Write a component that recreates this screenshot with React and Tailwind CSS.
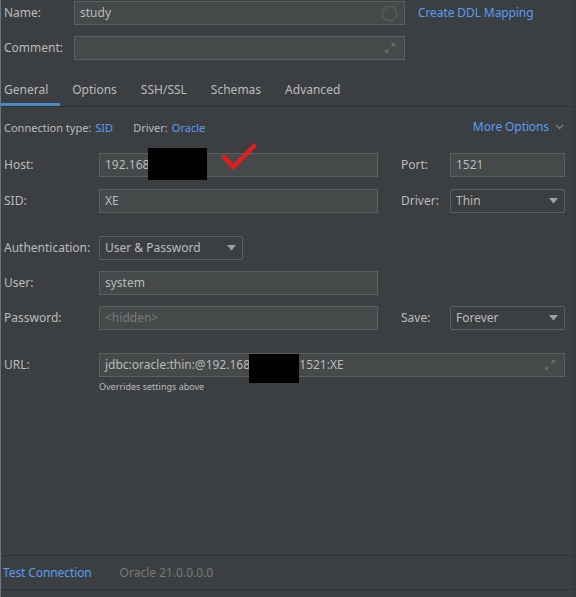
import React from "react";

function Field({ w, children, className = "", muted = false }) {
  return (
    <div
      className={`relative h-[24px] ${w} bg-[#45494a] border border-[#5e6060] flex items-center pl-[5px] ${
        muted ? "text-[#7b7b7b]" : "text-[#bbbbbb]"
      } ${className}`}
    >
      {children}
    </div>
  );
}

function Select({ w, value }) {
  return (
    <div
      className={`h-[24px] ${w} border border-[#5e6060] rounded-[2px] flex items-center justify-between pl-[5px] pr-[6px] text-[#bbbbbb]`}
    >
      <span>{value}</span>
      <svg width="9" height="6" viewBox="0 0 9 6">
        <path d="M0 0 L9 0 L4.5 5.5 Z" fill="#a0a0a0" />
      </svg>
    </div>
  );
}

function ExpandIcon() {
  return (
    <svg width="12" height="12" viewBox="0 0 12 12" className="absolute right-[8px]">
      <path d="M7 1 H11 V5 Z" fill="#6a6d6e" />
      <path d="M1 7 V11 H5 Z" fill="#6a6d6e" />
      <path d="M10 2 L7.5 4.5 M2 10 L4.5 7.5" stroke="#6a6d6e" strokeWidth="1.2" />
    </svg>
  );
}

function Label({ children, w = "w-[95px]" }) {
  return <div className={`${w} shrink-0 text-[#bbbbbb]`}>{children}</div>;
}

export default function App() {
  const tabs = ["General", "Options", "SSH/SSL", "Schemas", "Advanced"];

  return (
    <div className="w-[576px] h-[597px] bg-[#3c3f41] border-l border-r-[3px] border-l-[#6c7784] border-r-[#38393b] flex flex-col text-[12px] font-['Noto_Sans',sans-serif] leading-none overflow-hidden">
      {/* name / comment */}
      <div className="pl-[3px] pt-[1px] flex flex-col gap-[11px]">
        <div className="flex items-center">
          <Label w="w-[70px]">Name:</Label>
          <Field w="w-[331px]">
            study
            <div className="absolute right-[7px] w-[15px] h-[15px] rounded-full border border-[#646767]" />
          </Field>
          <a className="ml-[13px] text-[#589df6] tracking-[-0.1px]">Create DDL Mapping</a>
        </div>
        <div className="flex items-center">
          <Label w="w-[70px]">Comment:</Label>
          <Field w="w-[331px]">
            <ExpandIcon />
          </Field>
        </div>
      </div>

      {/* tabs */}
      <div className="mt-[17px] flex border-b border-[#303234]">
        {tabs.map((t, i) => (
          <div
            key={t}
            className={`h-[29px] flex items-center border-b-[3px] ${
              i === 0 ? "pl-[3px] pr-[12px] border-[#4a88c7]" : "px-[12px] border-transparent"
            } text-[#bbbbbb]`}
          >
            {t}
          </div>
        ))}
      </div>

      {/* connection type */}
      <div className="mt-[14px] pl-[3px] pr-[9px] flex items-center justify-between text-[11px]">
        <div className="flex items-center">
          <span className="text-[#bbbbbb]">Connection type:</span>
          <span className="ml-[4px] text-[#589df6]">SID</span>
          <span className="ml-[20px] text-[#bbbbbb]">Driver:</span>
          <span className="ml-[4px] text-[#589df6]">Oracle</span>
        </div>
        <div className="flex items-center gap-[6px] text-[#589df6] text-[12px] tracking-[-0.1px]">
          More Options
          <svg width="9" height="6" viewBox="0 0 9 6">
            <path d="M1 1 L4.5 4.5 L8 1" stroke="#7b7e80" strokeWidth="1.4" fill="none" />
          </svg>
        </div>
      </div>

      {/* host / sid */}
      <div className="mt-[20px] pl-[3px] flex flex-col gap-[12px]">
        <div className="flex items-center">
          <Label>Host:</Label>
          <Field w="w-[279px]">
            192.168
            <div className="absolute left-[48px] -top-[6px] w-[59px] h-[32px] bg-black" />
            <svg width="38" height="28" viewBox="0 0 38 28" className="absolute left-[120px] -top-[11px]">
              <path
                d="M4 14 L13 24 L34 3"
                stroke="#e41c1c"
                strokeWidth="4.5"
                strokeLinecap="round"
                strokeLinejoin="round"
                fill="none"
              />
            </svg>
          </Field>
          <Label w="w-[49px] ml-[23px]">Port:</Label>
          <Field w="w-[115px]">1521</Field>
        </div>
        <div className="flex items-center">
          <Label>SID:</Label>
          <Field w="w-[279px]">XE</Field>
          <Label w="w-[49px] ml-[23px]">Driver:</Label>
          <Select w="w-[115px]" value="Thin" />
        </div>
      </div>

      {/* auth */}
      <div className="mt-[23px] pl-[3px] flex flex-col gap-[11px]">
        <div className="flex items-center">
          <Label>Authentication:</Label>
          <Select w="w-[144px]" value="User & Password" />
        </div>
        <div className="flex items-center">
          <Label>User:</Label>
          <Field w="w-[279px]">system</Field>
        </div>
        <div className="flex items-center">
          <Label>Password:</Label>
          <Field w="w-[279px]" muted>
            &lt;hidden&gt;
          </Field>
          <Label w="w-[49px] ml-[23px]">Save:</Label>
          <Select w="w-[115px]" value="Forever" />
        </div>
      </div>

      {/* url */}
      <div className="mt-[23px] pl-[3px]">
        <div className="flex items-center">
          <Label>URL:</Label>
          <Field w="w-[466px]">
            jdbc:oracle:thin:@192.168.
            <span className="ml-[46px]">1521:XE</span>
            <div className="absolute left-[149px] top-[0px] w-[50px] h-[29px] bg-black" />
            <ExpandIcon />
          </Field>
        </div>
        <div className="ml-[95px] mt-[5px] text-[9px] text-[#bbbbbb]">Overrides settings above</div>
      </div>

      <div className="flex-1" />

      {/* footer */}
      <div className="border-t border-b border-[#303234] h-[35px] flex items-center pl-[2px] mb-[7px]">
        <span className="text-[#589df6] tracking-[-0.1px]">Test Connection</span>
        <span className="ml-[28px] text-[#787878]">Oracle 21.0.0.0.0</span>
      </div>
    </div>
  );
}
